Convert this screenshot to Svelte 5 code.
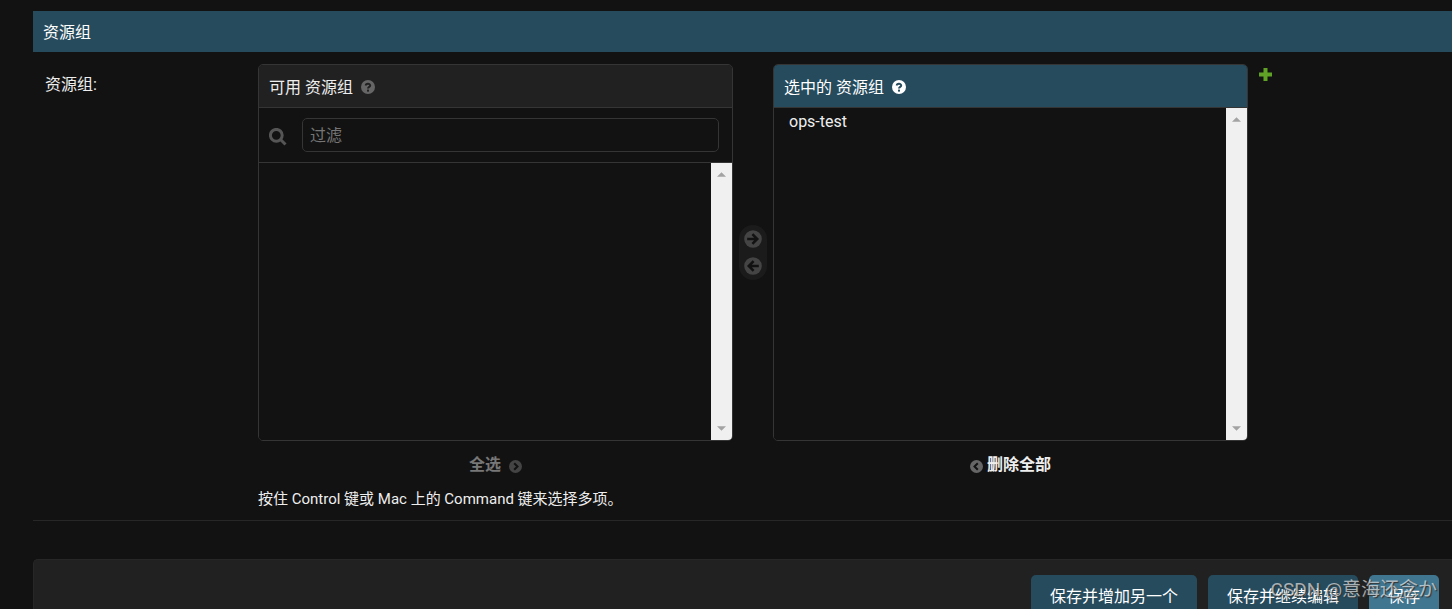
<!-- Admin change form section: a two-list selector for resource groups and the save bar -->
<script lang="ts">
	let filter = $state('');
	let available: string[] = $state([]);
	let chosen: string[] = $state(['ops-test']);
	let availablePicked: string[] = $state([]);
	let chosenPicked: string[] = $state([]);

	const visible = $derived(available.filter((name) => name.includes(filter)));

	function choose(names: string[]) {
		chosen = [...chosen, ...names];
		available = available.filter((name) => !names.includes(name));
		availablePicked = [];
	}

	function remove(names: string[]) {
		available = [...available, ...names];
		chosen = chosen.filter((name) => !names.includes(name));
		chosenPicked = [];
	}
</script>

{#snippet help()}
	<svg class="help" viewBox="0 0 14 14" aria-hidden="true">
		<circle cx="7" cy="7" r="7" fill="currentColor" />
		<path class="mark" d="M4.8 5.6C4.8 3.2 9.2 3.2 9.2 5.5C9.2 7 7 6.8 7 8.5" />
		<rect class="dot" x="6" y="9.6" width="2" height="2" />
	</svg>
{/snippet}

{#snippet scrollbar()}
	<div class="scrollbar" aria-hidden="true">
		<svg viewBox="0 0 10 5"><path d="M0 5L5 0L10 5Z" /></svg>
		<svg viewBox="0 0 10 5"><path d="M0 0L5 5L10 0Z" /></svg>
	</div>
{/snippet}

<div class="page">
	<form onsubmit={(e) => e.preventDefault()}>
		<section class="module">
			<h2>资源组</h2>
			<div class="form-row">
				<label class="field-label" for="chosen">资源组:</label>
				<div class="field">
					<div class="widget">
						<div class="selector">
							<div class="column">
								<div class="box">
									<h3><label for="available">可用 资源组</label>{@render help()}</h3>
									<div class="filter">
										<label for="filter" aria-label="过滤">
											<svg viewBox="0 0 18 18"><circle cx="7.3" cy="7.3" r="5.9" /><path d="M11.5 11.5L16.5 16.5" /></svg>
										</label>
										<input id="filter" type="text" placeholder="过滤" bind:value={filter} />
									</div>
									<div class="list">
										<select id="available" multiple bind:value={availablePicked}>
											{#each visible as name}<option value={name}>{name}</option>{/each}
										</select>
										{@render scrollbar()}
									</div>
								</div>
								<button type="button" class="all" onclick={() => choose(visible)}>
									全选
									<svg class="dim" viewBox="0 0 13 13"><circle cx="6.5" cy="6.5" r="6.5" /><path d="M5.2 3.2L8.5 6.5L5.2 9.8" /></svg>
								</button>
							</div>

							<div class="chooser">
								<button type="button" aria-label="选择" onclick={() => choose(availablePicked)}>
									<svg viewBox="0 0 18 18"><circle cx="9" cy="9" r="8.8" /><path d="M3.2 9H13M8.4 4.2L13.2 9L8.4 13.8" /></svg>
								</button>
								<button type="button" aria-label="删除" onclick={() => remove(chosenPicked)}>
									<svg viewBox="0 0 18 18"><circle cx="9" cy="9" r="8.8" /><path d="M14.8 9H5M9.6 4.2L4.8 9L9.6 13.8" /></svg>
								</button>
							</div>

							<div class="column">
								<div class="box chosen">
									<h3><label for="chosen">选中的 资源组</label>{@render help()}</h3>
									<div class="list">
										<select id="chosen" multiple bind:value={chosenPicked}>
											{#each chosen as name}<option value={name}>{name}</option>{/each}
										</select>
										{@render scrollbar()}
									</div>
								</div>
								<button type="button" class="all active" onclick={() => remove(chosen)}>
									<svg viewBox="0 0 13 13"><circle cx="6.5" cy="6.5" r="6.5" /><path d="M7.8 3.2L4.5 6.5L7.8 9.8" /></svg>
									删除全部
								</button>
							</div>
						</div>
						<a class="add" href="#add" aria-label="增加另一个 资源组">
							<svg viewBox="0 0 13 13"><path d="M4.5 0H8.5V4.5H13V8.5H8.5V13H4.5V8.5H0V4.5H4.5Z" /></svg>
						</a>
					</div>
					<p class="help-text">按住 Control 键或 Mac 上的 Command 键来选择多项。</p>
				</div>
			</div>
		</section>

		<div class="submit-row">
			<button type="submit">保存并增加另一个</button>
			<button type="submit">保存并继续编辑</button>
			<button type="submit" class="default">保存</button>
		</div>
	</form>
	<div class="watermark">CSDN @意海还念か</div>
</div>

<style>
	:global(body) {
		margin: 0;
		background: #121212;
	}

	.page {
		position: relative;
		box-sizing: border-box;
		height: 100vh;
		overflow: hidden;
		padding: 11px 0 0 33px;
		background: #121212;
		color: #eee;
		font-family: Roboto, 'Noto Sans CJK SC', sans-serif;
		font-size: 16px;
		line-height: 20px;
	}

	button,
	input,
	select {
		font: inherit;
		color: inherit;
	}

	button {
		border: 0;
		padding: 0;
		background: none;
		cursor: pointer;
	}

	svg {
		display: block;
		flex: none;
	}

	h2,
	h3 {
		margin: 0;
		font-size: 16px;
		font-weight: 400;
	}

	.module {
		margin-bottom: 38px;
	}

	h2 {
		padding: 12px 10px 9px;
		background: #264b5d;
		color: #fff;
	}

	.form-row {
		display: flex;
		padding: 12px 0 11px 12px;
		border-bottom: 1px solid #272727;
	}

	.field-label {
		flex: none;
		width: 213px;
		padding-top: 11px;
	}

	.field {
		flex: 1;
		min-width: 0;
	}

	.widget {
		display: flex;
		align-items: flex-start;
		gap: 11px;
	}

	.selector {
		display: flex;
		flex: 0 1 990px;
		min-width: 0;
	}

	.column {
		display: flex;
		flex: 1;
		flex-direction: column;
		align-items: center;
		min-width: 0;
	}

	.box {
		display: flex;
		flex-direction: column;
		box-sizing: border-box;
		width: 100%;
		height: 377px;
		overflow: hidden;
		border: 1px solid #353535;
		border-radius: 5px;
	}

	h3 {
		display: flex;
		align-items: center;
		gap: 8px;
		padding: 13px 10px 9px;
		border-bottom: 1px solid #353535;
		background: #212121;
	}

	.chosen h3 {
		background: #264b5d;
		color: #fff;
	}

	.help {
		width: 14px;
		height: 14px;
		margin-bottom: 2px;
		color: #666;
	}

	.help .mark {
		fill: none;
		stroke: #212121;
		stroke-width: 2;
	}

	.help .dot {
		fill: #212121;
	}

	.chosen .help {
		color: #fff;
	}

	.chosen .help .mark {
		stroke: #264b5d;
	}

	.chosen .help .dot {
		fill: #264b5d;
	}

	.filter {
		display: flex;
		align-items: center;
		gap: 15px;
		padding: 10px 13px 10px 10px;
		border-bottom: 1px solid #353535;
	}

	.filter svg {
		width: 18px;
		height: 18px;
		margin-top: 4px;
		fill: none;
		stroke: #555;
		stroke-width: 3;
	}

	.filter input {
		flex: 1;
		box-sizing: border-box;
		min-width: 0;
		height: 34px;
		padding: 5px 7px;
		border: 1px solid #353535;
		border-radius: 5px;
		background: #121212;
	}

	.filter input::placeholder {
		color: #757575;
	}

	.list {
		display: flex;
		flex: 1;
		min-height: 0;
	}

	select {
		flex: 1;
		min-width: 0;
		padding: 4px 13px;
		border: 0;
		outline: 0;
		background: #121212;
		overflow: hidden;
	}

	option {
		min-height: 20px;
		padding: 0 2px;
	}

	.scrollbar {
		display: flex;
		flex-direction: column;
		justify-content: space-between;
		align-items: center;
		box-sizing: border-box;
		width: 21px;
		padding: 9px 0;
		background: #f0f0f0;
	}

	.scrollbar svg {
		width: 9px;
		height: 5px;
		fill: #a3a3a3;
	}

	.chooser {
		display: flex;
		flex-direction: column;
		flex: none;
		align-self: flex-start;
		gap: 9px;
		margin: 161px 6px 0;
		padding: 5px;
		border-radius: 14px;
		background: #1b1b1b;
	}

	.chooser svg {
		width: 18px;
		height: 18px;
		fill: #444;
	}

	.chooser path {
		fill: none;
		stroke: #121212;
		stroke-width: 2.6;
	}

	.all {
		display: flex;
		align-items: center;
		gap: 8px;
		padding: 14px 0;
		color: #777;
		font-weight: 700;
	}

	.all.active {
		gap: 4px;
		color: #eee;
	}

	.all svg {
		width: 13px;
		height: 13px;
		margin-top: 3px;
		fill: #666;
	}

	.all .dim {
		fill: #444;
	}

	.all path {
		fill: none;
		stroke: #121212;
		stroke-width: 2;
	}

	.add svg {
		width: 13px;
		height: 13px;
		margin-top: 4px;
		fill: #5fa225;
	}

	.help-text {
		margin: 0;
		font-size: 15px;
	}

	.submit-row {
		display: flex;
		justify-content: flex-end;
		gap: 11px;
		padding: 15px 13px;
		border: 1px solid #272727;
		border-right: 0;
		border-radius: 5px 0 0 5px;
		background: #212121;
	}

	.submit-row button {
		height: 44px;
		padding: 0 19px;
		border-radius: 5px;
		background: #264b5d;
		color: #fff;
	}

	.submit-row .default {
		background: #417690;
	}

	.watermark {
		position: absolute;
		right: 15px;
		bottom: 7px;
		color: rgba(255, 255, 255, 0.6);
		font-size: 19px;
		line-height: 24px;
		text-shadow: 1px 1px 1px #333;
		pointer-events: none;
	}
</style>
